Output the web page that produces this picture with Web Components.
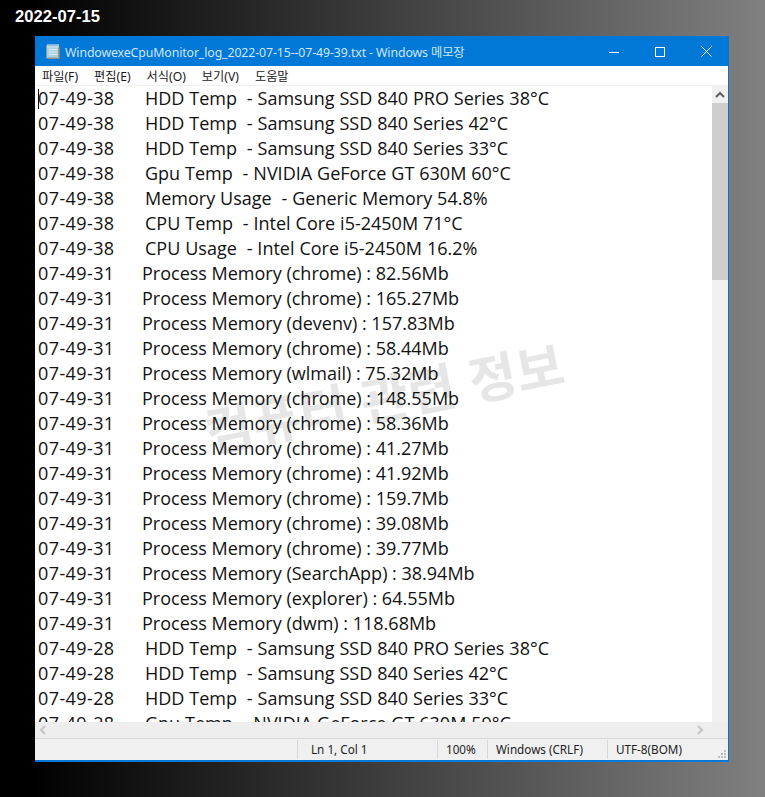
<!DOCTYPE html>
<html lang="ko">
<head>
<meta charset="utf-8">
<title>메모장</title>
<style>
html, body { margin: 0; padding: 0; height: 797px; overflow: hidden; }
</style>
</head>
<body>
<log-desktop date="2022-07-15">
  <note-window title="WindowexeCpuMonitor_log_2022-07-15--07-49-39.txt - Windows 메모장"></note-window>
</log-desktop>

<script>
const UI = '"Noto Sans", "Noto Sans CJK KR", sans-serif';

class LogDesktop extends HTMLElement {
  connectedCallback() {
    this.attachShadow({ mode: 'open' }).innerHTML = `
<style>
:host { display: block; width: 765px; height: 797px; box-sizing: border-box; overflow: hidden;
  background: linear-gradient(90deg, #000 0, #000 30px, #808080 765px); padding: 8px 0 0 15px; }
.date { height: 28px; font: bold 16.6px/18px "Liberation Sans", sans-serif; color: #fff; text-shadow: 0 0 2px #000; }
</style>
<div class="date">${this.getAttribute('date')}</div>
<slot></slot>`;
  }
}
customElements.define('log-desktop', LogDesktop);

class NoteWindow extends HTMLElement {
  connectedCallback() {
    this.attachShadow({ mode: 'open' }).innerHTML = `
<style>
:host { display: flex; flex-direction: column; box-sizing: border-box; width: 694px; height: 726px; margin-left: 20px;
  border: 1px solid #0078d7; border-left: 0; background: #fff; font-family: ${UI}; }
.title { display: flex; align-items: center; height: 29px; flex: none; background: #0078d7; color: #cfe6f8; font-size: 12.3px; }
.title svg.app { margin: 0 4px 0 9px; flex: none; }
.name { flex: 1; white-space: nowrap; letter-spacing: -.1px; }
.btn { width: 46px; height: 29px; display: flex; align-items: center; justify-content: center; flex: none; position: relative; left: 1px; }
.menu { display: flex; height: 19px; flex: none; align-items: center; font-size: 12.2px; color: #1a1a1a; padding-left: 7px; }
.menu span { margin-right: 16px; white-space: nowrap; }
</style>
<div class="title">
  <svg class="app" width="17" height="17" viewBox="0 0 17 17"><path d="M4 15.5h11.5V4" fill="none" stroke="#9a8458"/><rect x="2.5" y="3" width="12" height="12" fill="#a9d3e0" stroke="#7f9fb0"/><path d="M5 6.5h8M5 9h8M5 11.5h8" stroke="#dcecf2"/><path d="M4 1v3.5M6 1v3.5M8 1v3.5M10 1v3.5M12 1v3.5M14 1v3.5" stroke="#f2f2f2"/></svg>
  <span class="name">${this.getAttribute('title')}</span>
  <span class="btn"><svg width="10" height="10"><path d="M0 5.5h10" stroke="#fff"/></svg></span>
  <span class="btn"><svg width="10" height="10"><rect x=".5" y=".5" width="9" height="9" fill="none" stroke="#fff"/></svg></span>
  <span class="btn"><svg width="11" height="11"><path d="M.5.5l10 10M10.5.5l-10 10" stroke="#fff"/></svg></span>
</div>
<div class="menu"><span>파일(F)</span><span>편집(E)</span><span>서식(O)</span><span>보기(V)</span><span>도움말</span></div>
<log-view></log-view>
<h-scroll></h-scroll>
<status-bar></status-bar>`;
  }
}
customElements.define('note-window', NoteWindow);

const HDD = [
  ['07-49-38', 'HDD Temp  - Samsung SSD 840 PRO Series 38°C'],
  ['07-49-38', 'HDD Temp  - Samsung SSD 840 Series 42°C'],
  ['07-49-38', 'HDD Temp  - Samsung SSD 840 Series 33°C'],
  ['07-49-38', 'Gpu Temp  - NVIDIA GeForce GT 630M 60°C'],
  ['07-49-38', 'Memory Usage  - Generic Memory 54.8%'],
  ['07-49-38', 'CPU Temp  - Intel Core i5-2450M 71°C'],
  ['07-49-38', 'CPU Usage  - Intel Core i5-2450M 16.2%']
];
const PROC = [
  ['chrome', '82.56'], ['chrome', '165.27'], ['devenv', '157.83'], ['chrome', '58.44'], ['wlmail', '75.32'],
  ['chrome', '148.55'], ['chrome', '58.36'], ['chrome', '41.27'], ['chrome', '41.92'], ['chrome', '159.7'],
  ['chrome', '39.08'], ['chrome', '39.77'], ['SearchApp', '38.94'], ['explorer', '64.55'], ['dwm', '118.68']
];
const LAST = [
  ['07-49-28', 'HDD Temp  - Samsung SSD 840 PRO Series 38°C'],
  ['07-49-28', 'HDD Temp  - Samsung SSD 840 Series 42°C'],
  ['07-49-28', 'HDD Temp  - Samsung SSD 840 Series 33°C'],
  ['07-49-28', 'Gpu Temp  - NVIDIA GeForce GT 630M 59°C']
];

class LogView extends HTMLElement {
  connectedCallback() {
    const row = (t, m, cls) => `<div class="row ${cls}"><span class="t">${t}</span><span>${m}</span></div>`;
    const rows = HDD.map(r => row(r[0], r[1], 'sys')).join('')
      + PROC.map(p => row('07-49-31', `Process Memory (${p[0]}) : ${p[1]}Mb`, 'proc')).join('')
      + LAST.map(r => row(r[0], r[1], 'sys')).join('');
    this.attachShadow({ mode: 'open' }).innerHTML = `
<style>
:host { display: flex; flex: 1; min-height: 0; position: relative; border-top: 1px solid #f0f0f0; }
.text { flex: 1; overflow: hidden; padding-left: 3px; position: relative; font: 18px/25px "Open Sans", sans-serif; color: #111; white-space: pre; }
.row { display: flex; height: 25px; position: relative; }
.sys { word-spacing: .25px; }
.t { width: 107px; flex: none; letter-spacing: .4px; word-spacing: 0; }
.proc .t { width: 104px; }
.caret { position: absolute; left: 3px; top: 3px; width: 1px; height: 20px; background: #000; }
.mark { position: absolute; left: 167px; top: 280px; font: bold 52px/60px "Noto Sans CJK KR", sans-serif; color: #e6e6e6; transform: rotate(-11deg); white-space: nowrap; }
.bar { width: 16px; flex: none; background: #f0f0f0; position: relative; }
.up { height: 17px; display: flex; align-items: center; justify-content: center; }
.thumb { height: 177px; background: #cdcdcd; }
</style>
<div class="text"><div class="mark">컴퓨터 관련 정보</div>${rows}<div class="caret"></div></div>
<div class="bar"><div class="up"><svg width="10" height="7"><path d="M1 6l4-4 4 4" fill="none" stroke="#606060" stroke-width="2"/></svg></div><div class="thumb"></div></div>`;
  }
}
customElements.define('log-view', LogView);

class HScroll extends HTMLElement {
  connectedCallback() {
    this.attachShadow({ mode: 'open' }).innerHTML = `
<style>
:host { display: flex; flex: none; height: 16px; background: #eeeeee; align-items: center; justify-content: space-between; padding: 0 24px 0 4px; }
</style>
<svg width="7" height="10"><path d="M6 1L2 5l4 4" fill="none" stroke="#c4c4c4" stroke-width="2"/></svg>
<svg width="7" height="10"><path d="M1 1l4 4-4 4" fill="none" stroke="#c4c4c4" stroke-width="2"/></svg>`;
  }
}
customElements.define('h-scroll', HScroll);

class StatusBar extends HTMLElement {
  connectedCallback() {
    this.attachShadow({ mode: 'open' }).innerHTML = `
<style>
:host { display: flex; flex: none; height: 23px; box-sizing: border-box; border-top: 1px solid #d7d7d7; border-bottom: 1px solid #0078d7; background: #f0f0f0; font-size: 11.7px; color: #222; position: relative; }
span { box-sizing: border-box; border-left: 1px solid #d7d7d7; margin: 1px 0; padding-left: 13px; line-height: 18px; white-space: nowrap; }
.gap { flex: 1; }
.grip { position: absolute; right: 1px; bottom: 1px; }
</style>
<div class="gap"></div>
<span style="width:140px">Ln 1, Col 1</span>
<span style="width:50px;padding-left:8px">100%</span>
<span style="width:120px;padding-left:8px">Windows (CRLF)</span>
<span style="width:121px;padding-left:8px">UTF-8(BOM)</span>
<svg class="grip" width="10" height="10"><path d="M7 1h2v2H7zM4 4h2v2H4zM7 4h2v2H7zM1 7h2v2H1zM4 7h2v2H4zM7 7h2v2H7z" fill="#c0c0c0"/></svg>`;
  }
}
customElements.define('status-bar', StatusBar);
</script>
</body>
</html>
